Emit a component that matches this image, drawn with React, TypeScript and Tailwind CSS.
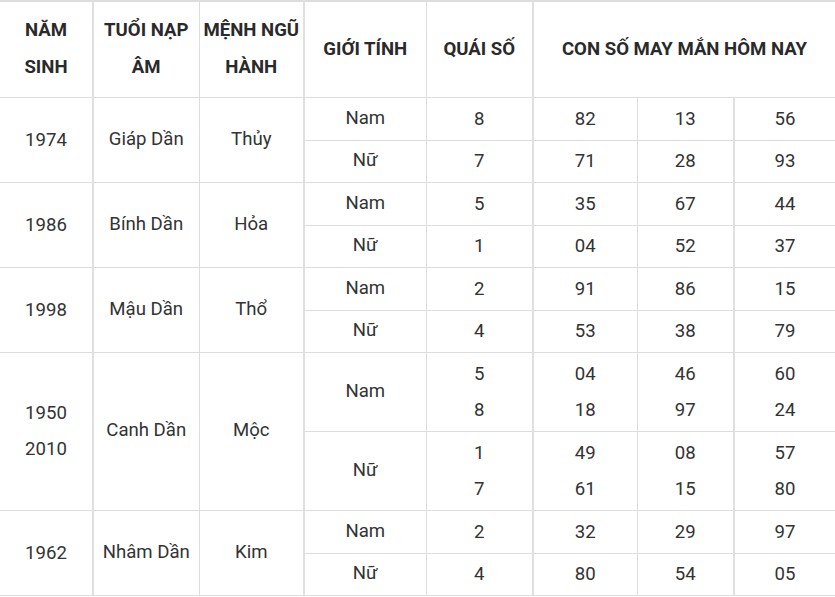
const groups = [
  {
    year: ['1974'],
    tuoi: 'Giáp Dần',
    menh: 'Thủy',
    rows: [
      { sex: 'Nam', qs: ['8'], nums: [['82'], ['13'], ['56']], h: 'h-[43px]' },
      { sex: 'Nữ', qs: ['7'], nums: [['71'], ['28'], ['93']], h: 'h-[42px]' },
    ],
  },
  {
    year: ['1986'],
    tuoi: 'Bính Dần',
    menh: 'Hỏa',
    rows: [
      { sex: 'Nam', qs: ['5'], nums: [['35'], ['67'], ['44']], h: 'h-[43px]' },
      { sex: 'Nữ', qs: ['1'], nums: [['04'], ['52'], ['37']], h: 'h-[42px]' },
    ],
  },
  {
    year: ['1998'],
    tuoi: 'Mậu Dần',
    menh: 'Thổ',
    rows: [
      { sex: 'Nam', qs: ['2'], nums: [['91'], ['86'], ['15']], h: 'h-[43px]' },
      { sex: 'Nữ', qs: ['4'], nums: [['53'], ['38'], ['79']], h: 'h-[42px]' },
    ],
  },
  {
    year: ['1950', '2010'],
    tuoi: 'Canh Dần',
    menh: 'Mộc',
    rows: [
      { sex: 'Nam', qs: ['5', '8'], nums: [['04', '18'], ['46', '97'], ['60', '24']], h: 'h-[79px]' },
      { sex: 'Nữ', qs: ['1', '7'], nums: [['49', '61'], ['08', '15'], ['57', '80']], h: 'h-[79px]' },
    ],
  },
  {
    year: ['1962'],
    tuoi: 'Nhâm Dần',
    menh: 'Kim',
    rows: [
      { sex: 'Nam', qs: ['2'], nums: [['32'], ['29'], ['97']], h: 'h-[43px]' },
      { sex: 'Nữ', qs: ['4'], nums: [['80'], ['54'], ['05']], h: 'h-[42px]' },
    ],
  },
];

const cell = 'border border-[#dddddd] text-center align-middle p-0';
const thick = 'border-r-2 border-r-[#e0e0e0]';

function Lines({ items }: { items: string[] }) {
  return (
    <div className="leading-[36px]">
      {items.map((t, i) => (
        <div key={i}>{t}</div>
      ))}
    </div>
  );
}

export default function App() {
  return (
    <div className="w-[835px] h-[597px] bg-white overflow-hidden" style={{ fontFamily: 'Roboto, "Noto Sans", sans-serif' }}>
      <table className="table-fixed border-collapse w-[835px] text-[18.6px] text-[#333333]">
        <colgroup>
          <col className="w-[93px]" />
          <col className="w-[106px]" />
          <col className="w-[105px]" />
          <col className="w-[122px]" />
          <col className="w-[107px]" />
          <col className="w-[104px]" />
          <col className="w-[97px]" />
          <col className="w-[101px]" />
        </colgroup>
        <thead>
          <tr className="h-[96px] font-bold text-[#2a2a2a] leading-[37px]">
            <th className={`${cell} ${thick} border-l-0 border-t-2`}>NĂM<br />SINH</th>
            <th className={`${cell} border-t-2`}>TUỔI NẠP<br />ÂM</th>
            <th className={`${cell} ${thick} border-t-2`}>MỆNH NGŨ<br />HÀNH</th>
            <th className={`${cell} border-t-2`}>GIỚI TÍNH</th>
            <th className={`${cell} ${thick} border-t-2`}>QUÁI SỐ</th>
            <th className={`${cell} border-r-0 border-t-2`} colSpan={3}>CON SỐ MAY MẮN HÔM NAY</th>
          </tr>
        </thead>
        <tbody>
          {groups.map((g, gi) =>
            g.rows.map((r, ri) => (
              <tr key={`${gi}-${ri}`} className={r.h}>
                {ri === 0 && (
                  <>
                    <td className={`${cell} ${thick} border-l-0`} rowSpan={2}>
                      <Lines items={g.year} />
                    </td>
                    <td className={cell} rowSpan={2}>{g.tuoi}</td>
                    <td className={`${cell} ${thick}`} rowSpan={2}>{g.menh}</td>
                  </>
                )}
                <td className={cell}>{r.sex}</td>
                <td className={`${cell} ${thick}`}><Lines items={r.qs} /></td>
                <td className={cell}><Lines items={r.nums[0]} /></td>
                <td className={`${cell} ${thick}`}><Lines items={r.nums[1]} /></td>
                <td className={`${cell} border-r-0`}><Lines items={r.nums[2]} /></td>
              </tr>
            ))
          )}
        </tbody>
      </table>
    </div>
  );
}
